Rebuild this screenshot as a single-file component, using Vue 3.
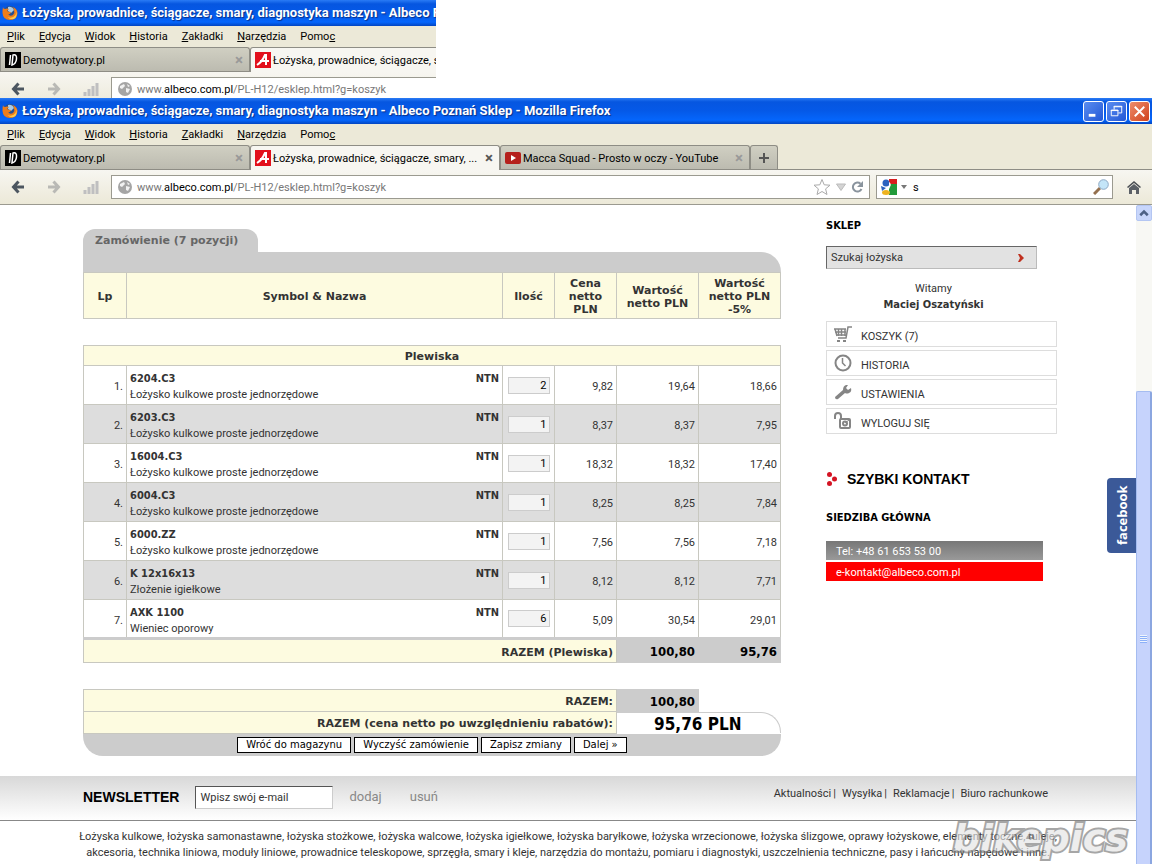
<template>
  <div class="desktop">
    <div
      v-for="shot in shots"
      :key="shot"
      :class="['window', shot]"
    >
      <header class="chrome">
        <div class="title-bar">
          <svg class="fox" viewBox="0 0 16 16">
            <circle cx="8" cy="8" r="7" fill="#27508f" />
            <path d="M6 2q4-1 6 3l-3 3-3-2z" fill="#a9cbe6" />
            <path
              d="M1 2q0 2 2 2 2-1 4 0L5 6q2 1 4 1-1 3-3 2 2 3 5 1 2-2 1-5 0-2-2-3 5 1 5.500 6-.5 7-7.500 7Q1 15 .5 8 .4 5 1 2z"
              fill="#ee7d1b"
            />
            <path d="M12 3q3 3 1.500 7-3 4-8 2 4 4 8 1 3-5-1.500-10z" fill="#fbc84b" />
          </svg>
          <h1>{{ title }} - Albeco Poznań Sklep - Mozilla Firefox</h1>
          <button class="win-btn" aria-label="Minimalizuj">
            <svg viewBox="0 0 20 20"><path d="M5 14h7" stroke="#fff" stroke-width="3" /></svg>
          </button>
          <button class="win-btn" aria-label="Przywróć">
            <svg viewBox="0 0 20 20" fill="none" stroke="#fff">
              <path d="M7.500 8V4.500h8v7H12M7 5h9M4.500 8.500h7v6h-7zM4 9h8" />
            </svg>
          </button>
          <button class="win-btn close" aria-label="Zamknij">
            <svg viewBox="0 0 20 20">
              <path d="M5 5l10 10M15 5L5 15" stroke="#fff" stroke-width="2" />
            </svg>
          </button>
        </div>
        <nav class="menu-bar">
          <button v-for="item in menu" :key="item.key + item.after">
            {{ item.before }}<u>{{ item.key }}</u>{{ item.after }}
          </button>
        </nav>
        <div class="tabs">
          <div class="tab">
            <svg class="favicon" viewBox="0 0 16 16">
              <path d="M0 0h16v16H0z" />
              <path d="M5.500 3l-1 10M8 3q4-1 3.500 4T7 13z" fill="none" stroke="#fff" stroke-width="1.500" />
            </svg>
            <span>Demotywatory.pl</span>
            <button aria-label="Zamknij kartę">×</button>
          </div>
          <div class="tab active">
            <svg class="favicon" viewBox="0 0 16 16">
              <path d="M0 0h16v16H0z" fill="#e2101c" />
              <path d="M2 13q5-3 8-10h1v10M5 9h9" fill="none" stroke="#fff" stroke-width="2" />
            </svg>
            <span>Łożyska, prowadnice, ściągacze, smary, ...</span>
            <button aria-label="Zamknij kartę">×</button>
          </div>
          <div class="tab">
            <svg class="favicon" viewBox="0 0 16 16">
              <rect y="2" width="16" height="12" rx="2" fill="#b5201c" />
              <path d="M6 5l5 3-5 3z" fill="#fff" />
            </svg>
            <span>Macca Squad - Prosto w oczy - YouTube</span>
            <button aria-label="Zamknij kartę">×</button>
          </div>
          <button class="new-tab" aria-label="Nowa karta">
            <svg viewBox="0 0 12 12"><path d="M6 1v10M1 6h10" stroke="#555" stroke-width="2" /></svg>
          </button>
        </div>
        <div class="nav-bar">
          <button class="nav-btn" aria-label="Wstecz">
            <svg viewBox="0 0 14 14" fill="none" stroke="#4c5660" stroke-width="3">
              <path d="M7.500 1.500L2.500 7l5 5.500M3 7h10" />
            </svg>
          </button>
          <button class="nav-btn" aria-label="Dalej">
            <svg viewBox="0 0 14 14" fill="none" stroke="#b9b9b5" stroke-width="3">
              <path d="M6.500 1.500l5 5.500-5 5.500M11 7H1" />
            </svg>
          </button>
          <svg class="signal" viewBox="0 0 16 14">
            <path d="M2 14v-4M6 14V7M10 14V4M14 14V1" stroke="#bfbfc0" stroke-width="3" />
          </svg>
          <div class="url-box">
            <svg viewBox="0 0 14 14">
              <circle cx="7" cy="7" r="7" fill="#a5a5a5" />
              <path d="M2 4l4-2 1 2-3 3-2-1zM8 6l4 1-2 4-2-1zM9 2l3 2-2 1z" fill="#f1f1f1" />
            </svg>
            <div class="url">www.<b>albeco.com.pl</b>/PL-H12/esklep.html?g=koszyk</div>
            <svg class="star" viewBox="0 0 18 18" fill="#fff" stroke="#aaa">
              <path d="M9 1.500l2.200 5.300 5.800.4-4.400 3.700 1.400 5.600L9 13.500l-5 3 1.400-5.600L1 7.200l5.800-.4z" />
            </svg>
            <svg class="drop" viewBox="0 0 10 8"><path d="M.5 1h9L5 7.500z" fill="#d4d4d4" stroke="#bbb" /></svg>
            <svg class="reload" viewBox="0 0 12 12">
              <path d="M9.500 2.800A4.500 4.500 0 1 0 10.500 8" fill="none" stroke="#8a949e" stroke-width="2" />
              <path d="M12 0v6H6z" fill="#8a949e" />
            </svg>
          </div>
          <div class="search-box">
            <svg viewBox="0 0 16 16">
              <path d="M8 0h8v5H8z" fill="#d81e1e" />
              <path d="M8 5h8v11H8z" fill="#219a3a" />
              <circle cx="5" cy="4" r="3.500" fill="#2a62bf" />
              <path d="M0 7l5 2-4 3z" fill="#2a62bf" />
              <ellipse cx="5" cy="13.500" rx="4" ry="2.500" fill="#edb21f" />
              <path d="M8 3q3 2 1 5t-1 5z" fill="#fff" />
            </svg>
            <svg class="caret" viewBox="0 0 6 4"><path d="M0 0h6L3 4z" fill="#777" /></svg>
            <input value="s" aria-label="Szukaj w sieci" />
            <svg viewBox="0 0 16 16">
              <path d="M1 15l6-6" stroke="#94704e" stroke-width="3" />
              <circle cx="10.500" cy="5.500" r="4.800" fill="#c4e5f8" stroke="#8fa9c4" />
            </svg>
          </div>
          <button class="nav-btn home" aria-label="Strona startowa">
            <svg viewBox="0 0 14 14">
              <path d="M0 7l7-6 7 6-1 1-6-5-6 5z" fill="#4b4f54" />
              <path d="M2 8l5-4 5 4v6H9v-4H5v4H2z" fill="#5b6066" />
            </svg>
          </button>
        </div>
      </header>

      <div v-if="shot === 'full'" class="viewport">
        <div class="page">
          <main class="container">
            <form class="order" @submit.prevent>
              <h2>Zamówienie (7 pozycji)</h2>
              <div class="order-top"></div>
              <table>
                <colgroup>
                  <col class="col-lp" />
                  <col />
                  <col class="col-qty" />
                  <col class="col-price" />
                  <col class="col-value" />
                  <col class="col-value" />
                </colgroup>
                <thead>
                  <tr class="head">
                    <th>Lp</th>
                    <th>Symbol &amp; Nazwa</th>
                    <th>Ilość</th>
                    <th>Cena netto PLN</th>
                    <th>Wartość netto PLN</th>
                    <th>Wartość netto PLN -5%</th>
                  </tr>
                </thead>
                <tbody>
                  <tr class="spacer"><td colspan="6"></td></tr>
                  <tr class="group"><th colspan="6">Plewiska</th></tr>
                  <tr v-for="(row, idx) in rows" :key="row.symbol" class="item">
                    <td class="num">{{ idx + 1 }}.</td>
                    <td>
                      <div class="symbol"><b>{{ row.symbol }}</b><b>NTN</b></div>
                      <div>{{ row.name }}</div>
                    </td>
                    <td class="qty">
                      <input v-model="row.qty" :aria-label="'Ilość ' + row.symbol" />
                    </td>
                    <td class="num">{{ row.price }}</td>
                    <td class="num">{{ row.value }}</td>
                    <td class="num">{{ row.discounted }}</td>
                  </tr>
                  <tr class="sum group-sum">
                    <th colspan="4">RAZEM (Plewiska)</th>
                    <td>100,80</td>
                    <td>95,76</td>
                  </tr>
                  <tr class="spacer"><td colspan="6"></td></tr>
                  <tr class="sum">
                    <th colspan="4">RAZEM:</th>
                    <td>100,80</td>
                  </tr>
                  <tr class="sum">
                    <th colspan="4">RAZEM (cena netto po uwzględnieniu rabatów):</th>
                    <td colspan="2" class="total"><div>95,76 PLN</div></td>
                  </tr>
                </tbody>
              </table>
              <div class="order-bottom">
                <button v-for="label in actions" :key="label">{{ label }}</button>
              </div>
            </form>

            <aside>
              <h3>SKLEP</h3>
              <div class="finder">
                <input value="Szukaj łożyska" aria-label="Szukaj łożyska" />
                <button aria-label="Szukaj">
                  <svg viewBox="0 0 8 10"><path d="M1 1h2l4 4-4 4H1l2-4z" fill="#c0311f" /></svg>
                </button>
              </div>
              <p class="welcome">Witamy<b>Maciej Oszatyński</b></p>
              <nav class="side-menu">
                <a href="#">
                  <svg viewBox="0 0 20 18" fill="none" stroke="#858585" stroke-width="2">
                    <path d="M1 4h12M2 7h11M3 10h9M2 4l2 7M5.500 4v7M8.500 4v7M12 4v7M19 2h-4l-2 11H5" stroke-width="1.500" />
                    <path d="M4 16h3M10 16h3" />
                  </svg>
                  KOSZYK (7)
                </a>
                <a href="#">
                  <svg viewBox="0 0 20 18" fill="none" stroke="#858585" stroke-width="2">
                    <circle cx="10" cy="9" r="7.500" />
                    <path d="M9.500 4v5l3 3" stroke-width="1.500" />
                  </svg>
                  HISTORIA
                </a>
                <a href="#">
                  <svg viewBox="0 0 20 18">
                    <path
                      d="M2 14l8-7q0-4 3-5h2l-2 3 2 2 3-2q1 4-2 5-2 1-4 0l-7 6q-3 1-3-2z"
                      fill="#858585"
                    />
                  </svg>
                  USTAWIENIA
                </a>
                <a href="#">
                  <svg viewBox="0 0 20 18" fill="none" stroke="#858585" stroke-width="2">
                    <path d="M2 7V4q0-3 3-3t3 3v3" />
                    <rect x="7" y="7" width="10" height="9" rx="1" />
                    <circle cx="12" cy="11.500" r="2" />
                    <path d="M12 11l4-3" stroke-width="1" />
                  </svg>
                  WYLOGUJ SIĘ
                </a>
              </nav>
              <h2>
                <svg viewBox="0 0 12 14" fill="#d41423">
                  <circle cx="3.500" cy="2.500" r="2.500" />
                  <circle cx="8.500" cy="7" r="2.500" />
                  <circle cx="3.500" cy="11.500" r="2.500" />
                </svg>
                SZYBKI KONTAKT
              </h2>
              <h3>SIEDZIBA GŁÓWNA</h3>
              <div class="contact">
                <span>Tel: +48 61 653 53 00</span>
                <a href="#">e-kontakt@albeco.com.pl</a>
              </div>
            </aside>
          </main>

          <footer>
            <div class="newsletter">
              <form class="container" @submit.prevent>
                <label for="email">NEWSLETTER</label>
                <input id="email" value="Wpisz swój e-mail" />
                <button>dodaj</button>
                <button>usuń</button>
                <nav>
                  <template v-for="(link, idx) in links" :key="link">
                    <i v-if="idx">|</i><a href="#">{{ link }}</a>
                  </template>
                </nav>
              </form>
            </div>
            <p class="keywords">
              Łożyska kulkowe, łożyska samonastawne, łożyska stożkowe, łożyska walcowe, łożyska igiełkowe, łożyska baryłkowe, łożyska wrzecionowe, łożyska ślizgowe, oprawy łożyskowe, elementy toczne, tuleje,<br />
              akcesoria, technika liniowa, moduły liniowe, prowadnice teleskopowe, sprzęgła, smary i kleje, narzędzia do montażu, pomiaru i diagnostyki, uszczelnienia techniczne, pasy i łańcuchy napędowe i inne.
            </p>
          </footer>
          <button class="facebook">facebook</button>
          <div class="watermark">bikepics</div>
        </div>
        <div class="scrollbar">
          <button aria-label="W górę">
            <svg viewBox="0 0 8 6"><path d="M1 5l3-3 3 3" fill="none" stroke="#4d6185" stroke-width="2" /></svg>
          </button>
          <div class="track"></div>
          <div class="thumb"><span></span></div>
        </div>
      </div>
    </div>
  </div>
</template>

<script setup>
import { ref } from 'vue';

const shots = ['fragment', 'full'];
const title = 'Łożyska, prowadnice, ściągacze, smary, diagnostyka maszyn';

const menu = [
  { before: '', key: 'P', after: 'lik' },
  { before: '', key: 'E', after: 'dycja' },
  { before: '', key: 'W', after: 'idok' },
  { before: '', key: 'H', after: 'istoria' },
  { before: '', key: 'Z', after: 'akładki' },
  { before: '', key: 'N', after: 'arzędzia' },
  { before: 'Pomo', key: 'c', after: '' },
];

const bearing = 'Łożysko kulkowe proste jednorzędowe';
const rows = ref([
  { symbol: '6204.C3', name: bearing, qty: 2, price: '9,82', value: '19,64', discounted: '18,66' },
  { symbol: '6203.C3', name: bearing, qty: 1, price: '8,37', value: '8,37', discounted: '7,95' },
  { symbol: '16004.C3', name: bearing, qty: 1, price: '18,32', value: '18,32', discounted: '17,40' },
  { symbol: '6004.C3', name: bearing, qty: 1, price: '8,25', value: '8,25', discounted: '7,84' },
  { symbol: '6000.ZZ', name: bearing, qty: 1, price: '7,56', value: '7,56', discounted: '7,18' },
  { symbol: 'K 12x16x13', name: 'Złożenie igiełkowe', qty: 1, price: '8,12', value: '8,12', discounted: '7,71' },
  { symbol: 'AXK 1100', name: 'Wieniec oporowy', qty: 6, price: '5,09', value: '30,54', discounted: '29,01' },
]);

const actions = ['Wróć do magazynu', 'Wyczyść zamówienie', 'Zapisz zmiany', 'Dalej »'];
const links = ['Aktualności', 'Wysyłka', 'Reklamacje', 'Biuro rachunkowe'];
</script>

<style>
body {
  margin: 0;
  background: #fff;
}
</style>

<style scoped>
.desktop {
  --ui: Roboto, 'Liberation Sans', sans-serif;
  --wide: 'DejaVu Sans', sans-serif;
  --narrow-bold: 'DejaVu Sans Condensed', 'DejaVu Sans', sans-serif;
  display: flex;
  flex-direction: column;
  min-height: 100vh;
  font: 11px/16px var(--ui);
  color: #333;
}

.desktop * {
  box-sizing: border-box;
}

h1,
h2,
h3,
p {
  margin: 0;
}

button,
input {
  font: inherit;
  color: inherit;
  margin: 0;
  padding: 0;
  border: 0;
  background: none;
}

a {
  color: inherit;
  text-decoration: none;
}

svg {
  display: block;
  flex: none;
}

.window.fragment {
  width: 436px;
  height: 98px;
  overflow: hidden;
}

.window.full {
  flex: 1;
  display: flex;
  flex-direction: column;
}

.chrome {
  width: 100vw;
  color: #000;
  background: #ece9d8;
}

.title-bar {
  display: flex;
  align-items: center;
  gap: 2px;
  height: 26px;
  padding: 0 2px;
  background: linear-gradient(#2a7bf5, #0656e0 15%, #0559e8 50%, #0566fc 85%, #0345c0);
}

.title-bar h1 {
  flex: 1;
  margin-left: 2px;
  font: bold 13px/16px Roboto, sans-serif;
  color: #fff;
  text-shadow: 1px 1px 1px #0a2f86;
}

.fox {
  width: 16px;
  height: 16px;
}

.win-btn {
  width: 21px;
  height: 21px;
  border: 1px solid #fff;
  border-radius: 3px;
  background: linear-gradient(135deg, #5b8df0, #2257d6);
}

.win-btn.close {
  background: linear-gradient(135deg, #ee8d6c, #d0421c);
}

.menu-bar {
  display: flex;
  gap: 14px;
  height: 21px;
  padding: 2px 7px;
}

.menu-bar button {
  line-height: 16px;
}

.tabs {
  display: flex;
  height: 25px;
  border-bottom: 1px solid #8e8d85;
}

.tab {
  display: flex;
  align-items: center;
  gap: 2px;
  width: 250px;
  padding: 0 6px 0 4px;
  border: 1px solid #8e8d85;
  border-bottom: 0;
  border-radius: 3px 3px 0 0;
  background: linear-gradient(#d0cfc2, #bcbbb0);
}

.tab.active {
  height: 25px;
  background: #f7f6f1;
}

.tab span {
  flex: 1;
  padding-top: 2px;
  white-space: nowrap;
}

.tab button {
  font: bold 15px/16px var(--ui);
  color: #999;
}

.tab.active button {
  color: #555;
}

.favicon {
  width: 16px;
  height: 16px;
}

.new-tab {
  display: flex;
  align-items: center;
  justify-content: center;
  width: 28px;
  border: 1px solid #8e8d85;
  border-bottom: 0;
  border-radius: 3px 3px 0 0;
  background: linear-gradient(#d0cfc2, #bcbbb0);
}

.new-tab svg {
  width: 12px;
}

.nav-bar {
  display: flex;
  align-items: center;
  height: 35px;
  padding: 0 11px;
  border-bottom: 1px solid #9b9a90;
  background: linear-gradient(#f7f6f1, #ece9d8);
}

.nav-btn {
  margin-right: 22px;
}

.nav-btn svg {
  width: 14px;
}

.signal {
  width: 16px;
  margin-right: 12px;
}

.url-box,
.search-box {
  display: flex;
  align-items: center;
  height: 24px;
  border: 1px solid #9b9a90;
  background: #fff;
}

.url-box {
  flex: 1;
  gap: 5px;
  padding: 0 6px;
}

.url-box > svg {
  width: 14px;
}

.url {
  flex: 1;
  padding-top: 2px;
  color: #777;
}

.url b {
  font-weight: normal;
  color: #000;
}

.url-box > .star {
  width: 18px;
}

.url-box > .drop {
  width: 10px;
}

.url-box > .reload {
  width: 12px;
}

.search-box {
  gap: 4px;
  width: 237px;
  margin-left: 6px;
  padding: 0 3px 0 4px;
}

.search-box svg {
  width: 16px;
}

.search-box .caret {
  width: 6px;
}

.search-box input {
  flex: 1;
  min-width: 0;
  padding: 2px 0 0 2px;
}

.nav-btn.home {
  margin: 0 0 0 14px;
}

.viewport {
  flex: 1;
  display: flex;
}

.page {
  position: relative;
  flex: 1;
  display: flex;
  flex-direction: column;
}

.container {
  display: flex;
  width: 100%;
  max-width: 978px;
  margin: 0 auto;
  padding-left: 4px;
}

main.container {
  flex: 1;
  gap: 45px;
  padding-top: 24px;
  padding-bottom: 20px;
}

.order {
  flex: 1;
}

.order h2 {
  width: 175px;
  height: 23px;
  padding-left: 12px;
  border-radius: 12px 12px 0 0;
  background: #ccc;
  font: bold 11px/24px var(--wide);
  color: #666;
}

.order-top {
  height: 20px;
  border-radius: 0 20px 0 0;
  background: #ccc;
}

table {
  width: 100%;
  table-layout: fixed;
  border-collapse: collapse;
}

.col-lp {
  width: 43px;
}

.col-qty {
  width: 52px;
}

.col-price {
  width: 62px;
}

.col-value {
  width: 82px;
}

th,
td {
  padding: 2px 3px 0;
  border: 1px solid #c8c8c0;
}

th {
  background: #fdfbe0;
  font: bold 11px/13px var(--wide);
}

.head th {
  height: 46px;
}

.spacer td {
  height: 27px;
  border-width: 0;
}

.group th {
  height: 20px;
}

.item td {
  height: 39px;
  padding-top: 4px;
}

.item:nth-child(even) td {
  background: #ddd;
}

.item td.num {
  text-align: right;
}

.item td.qty {
  padding-top: 0;
}

.symbol {
  display: flex;
  justify-content: space-between;
  font-family: var(--narrow-bold);
}

.qty input {
  display: block;
  width: 42px;
  height: 17px;
  margin: 0 auto;
  padding-right: 2px;
  border: 1px solid #ccc;
  background: #f3f3f3;
  color: #000;
  text-align: right;
}

.sum th {
  height: 22px;
  text-align: right;
}

.sum td {
  border-color: #ccc;
  background: #ccc;
  font: bold 13px/16px var(--narrow-bold);
  text-align: right;
  color: #000;
}

.group-sum th,
.group-sum td {
  height: 24px;
  border-top: 3px solid #ccc;
}

.sum td.total {
  padding: 0;
  border-width: 0;
  background: none;
}

.total div {
  height: 21px;
  padding-right: 38px;
  border: 1px solid #ccc;
  border-width: 1px 1px 0 0;
  border-radius: 0 20px 0 0;
  font: bold 17px/22px var(--narrow-bold);
}

.order-bottom {
  display: flex;
  justify-content: center;
  gap: 3px;
  height: 22px;
  padding: 3px 0;
  border-radius: 0 0 20px 20px;
  background: #ccc;
}

.order-bottom button {
  padding: 0 8px;
  border: 1px solid #000;
  background: #fff;
  color: #000;
  font: 10px/14px var(--wide);
}

aside {
  width: 231px;
  margin-top: -11px;
}

aside h3 {
  font: bold 11px/16px var(--narrow-bold);
  color: #000;
}

.finder {
  display: flex;
  width: 211px;
  height: 23px;
  margin-top: 12px;
  padding: 0 11px 0 4px;
  border: 1px solid #bbb;
  border-top-color: #666;
  border-left-color: #666;
  background: #e2e2e2;
}

.finder input {
  flex: 1;
  min-width: 0;
}

.finder svg {
  width: 8px;
}

.welcome {
  margin: 12px 16px 8px 0;
  text-align: center;
}

.welcome b {
  display: block;
  font-family: var(--narrow-bold);
}

.side-menu {
  display: flex;
  flex-direction: column;
  gap: 3px;
}

.side-menu a {
  display: flex;
  align-items: center;
  gap: 8px;
  height: 26px;
  padding: 5px 6px 0;
  border: 1px solid #ddd;
}

.side-menu svg {
  width: 20px;
  margin-top: -6px;
}

aside h2 {
  display: flex;
  align-items: center;
  gap: 9px;
  margin: 36px 0 22px;
  font: bold 14px/18px 'Liberation Sans', sans-serif;
  color: #000;
}

aside h2 svg {
  width: 12px;
}

.contact {
  display: flex;
  flex-direction: column;
  gap: 2px;
  width: 217px;
  margin-top: 15px;
  color: #fff;
}

.contact > * {
  height: 19px;
  padding-left: 10px;
  line-height: 21px;
  background: #f00;
}

.contact span {
  background: linear-gradient(#777, #999);
}

.newsletter {
  height: 45px;
  border-bottom: 1px solid #888;
  background: linear-gradient(#d8d8d8, #fff);
}

.newsletter .container {
  align-items: center;
  height: 42px;
}

.newsletter label {
  font: bold 14px/18px 'Liberation Sans', sans-serif;
  color: #000;
}

.newsletter input {
  width: 138px;
  height: 23px;
  margin-left: 16px;
  padding-left: 4px;
  border: 1px solid #ccc;
  border-top-color: #555;
  border-left-color: #555;
  background: #fff;
}

.newsletter button {
  margin-left: 16px;
  font: 13px/16px Roboto, sans-serif;
  color: #888;
}

.newsletter button + button {
  margin-left: 28px;
}

.newsletter nav {
  margin: 0 9px 6px auto;
}

.newsletter i {
  margin: 0 6px 0 2px;
  font-style: normal;
}

.keywords {
  padding: 8px 0 3px;
  text-align: center;
  white-space: nowrap;
}

.facebook {
  position: absolute;
  top: 273px;
  right: 0;
  width: 29px;
  height: 75px;
  border-radius: 0 4px 4px 0;
  background: #3b5998;
  color: #fff;
  font: bold 13px/28px 'Open Sans', sans-serif;
  writing-mode: vertical-rl;
  transform: rotate(180deg);
}

.watermark {
  position: absolute;
  right: 8px;
  bottom: 6px;
  font: italic bold 38px/40px var(--wide);
  color: #e4e4e4;
  paint-order: stroke fill;
  -webkit-text-stroke: 4px #777;
  opacity: 0.65;
}

.scrollbar {
  display: flex;
  flex-direction: column;
  width: 16px;
  background: #f8f8f4;
}

.scrollbar button {
  display: flex;
  align-items: center;
  justify-content: center;
  height: 16px;
  border: 1px solid #b4c6f2;
  border-radius: 2px;
  background: #c8d6fb;
}

.scrollbar svg {
  width: 10px;
}

.track {
  flex: 170;
}

.thumb {
  flex: 473;
  border: 1px solid #a5bcf0;
  border-right: 2px solid #8ba6e0;
  border-bottom: 0;
  border-radius: 2px 2px 0 0;
  background: #c6d3fc;
}

.thumb span {
  display: block;
  height: 8px;
  margin: 243px 3px 0;
  background: repeating-linear-gradient(#eef4fe 0 1px, #8cb0f8 1px 2px);
}
</style>
